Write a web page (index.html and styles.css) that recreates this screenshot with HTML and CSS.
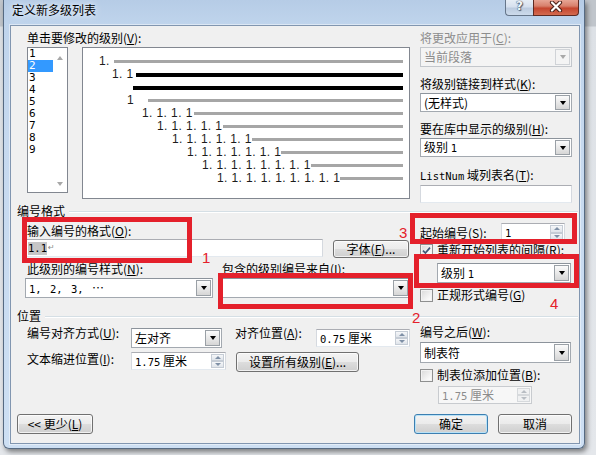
FILE: index.html
```html
<!DOCTYPE html>
<html lang="zh-CN">
<head>
<meta charset="utf-8">
<title>定义新多级列表</title>
<link rel="stylesheet" href="styles.css">
</head>
<body>
<div class="screen">
  <div class="window">
    <div class="titlebar">
      <div class="title">定义新多级列表</div>
      <div class="caps">
        <div class="cap help">?</div>
        <div class="cap close">
          <svg width="14" height="11" viewBox="0 0 14 11"><path d="M3 1.5 L11 9.5 M11 1.5 L3 9.5" stroke="#4a1f18" stroke-width="4.2" stroke-linecap="round"/><path d="M3 1.5 L11 9.5 M11 1.5 L3 9.5" stroke="#ffffff" stroke-width="2.2" stroke-linecap="round"/></svg>
        </div>
      </div>
    </div>
    <div class="client">
      <div class="top">
        <div class="top-left">
          <div class="lbl">单击要修改的级别(<u>V</u>):</div>
          <div class="level-row">
            <div class="listbox">
              <div class="items">
                <div class="item">1</div>
                <div class="item sel">2</div>
                <div class="item">3</div>
                <div class="item">4</div>
                <div class="item">5</div>
                <div class="item">6</div>
                <div class="item">7</div>
                <div class="item">8</div>
                <div class="item">9</div>
              </div>
              <div class="vscroll"><span class="sarrow up"></span><span class="sarrow down"></span></div>
            </div>
            <div class="preview">
              <div class="prow p1"><span class="num">1.</span><span class="ln g4"></span></div>
              <div class="prow p2"><span class="num">1. 1</span><span class="ln blk g2"></span></div>
              <div class="prow p3"><span class="ln blk"></span></div>
              <div class="prow p4"><span class="num">1</span><span class="ln g14"></span></div>
              <div class="prow p5"><span class="num">1. 1. 1. 1</span><span class="ln g1"></span></div>
              <div class="prow p6"><span class="num">1. 1. 1. 1. 1</span><span class="ln g1"></span></div>
              <div class="prow p7"><span class="num">1. 1. 1. 1. 1. 1</span><span class="ln"></span></div>
              <div class="prow p8"><span class="num">1. 1. 1. 1. 1. 1. 1</span><span class="ln"></span></div>
              <div class="prow p9"><span class="num">1. 1. 1. 1. 1. 1. 1. 1</span><span class="ln"></span></div>
              <div class="prow p10"><span class="num">1. 1. 1. 1. 1. 1. 1. 1. 1</span><span class="ln"></span></div>
            </div>
          </div>
        </div>
        <div class="top-right">
          <div class="lbl dis-txt">将更改应用于(<u>C</u>):</div>
          <div class="combo dis tr1"><span class="val"><span>当前段落</span></span><span class="dd"><i class="tri"></i></span></div>
          <div class="lbl tr-gap">将级别链接到样式(<u>K</u>):</div>
          <div class="combo tr2"><span class="val"><span>(无样式)</span></span><span class="dd"><i class="tri"></i></span></div>
          <div class="lbl tr-gap">要在库中显示的级别(<u>H</u>):</div>
          <div class="combo tr2"><span class="val"><span>级别&nbsp;<span class="m">1</span></span></span><span class="dd"><i class="tri"></i></span></div>
          <div class="lbl tr-gap4"><span class="m">ListNum</span> 域列表名(<u>T</u>):</div>
          <div class="tbox tr4"></div>
        </div>
      </div>

      <div class="ghead g-first"><span>编号格式</span><span class="gl"></span></div>

      <div class="mid">
        <div class="mid-left">
          <div class="lbl pl2 mt6">输入编号的格式(<u>O</u>):</div>
          <div class="fmt-row">
            <div class="tbox fmt"><span class="hl m">1.1</span><span class="ret">↵</span></div>
            <div class="btn font-btn">字体(<u>F</u>)...</div>
          </div>
          <div class="pair-row lbl-row">
            <div class="lbl pl2 w188">此级别的编号样式(<u>N</u>):</div>
            <div class="lbl w188">包含的级别编号来自(<u>I</u>):</div>
          </div>
          <div class="pair-row combo-row">
            <div class="combo w188 h20"><span class="val"><span><span class="m sp">1,&nbsp;2,&nbsp;3,&nbsp;</span>…</span></span><span class="dd"><i class="tri"></i></span></div>
            <div class="combo w188 h20"><span class="val"></span><span class="dd"><i class="tri"></i></span></div>
          </div>
        </div>
        <div class="mid-right">
          <div class="sn-row">
            <div class="lbl w81">起始编号(<u>S</u>):</div>
            <div class="spin sn"><span class="val"><span class="m">1</span></span><span class="arrows"><span class="arr up"><i></i></span><span class="arr down"><i></i></span></span></div>
          </div>
          <div class="cb-row mt1">
            <span class="cb checked"><svg width="9" height="9" viewBox="0 0 9 9"><path d="M1 4.6 L3.4 7 L8 1.6" fill="none" stroke="#3f5576" stroke-width="1.7"/></svg></span>
            <span class="lbl">重新开始列表的间隔(<u>R</u>):</span>
          </div>
          <div class="combo lvl h20"><span class="val"><span>级别&nbsp;<span class="m">1</span></span></span><span class="dd"><i class="tri"></i></span></div>
          <div class="cb-row mt5">
            <span class="cb"></span>
            <span class="lbl">正规形式编号(<u>G</u>)</span>
          </div>
        </div>
      </div>

      <div class="ghead g-second"><span>位置</span><span class="gl"></span></div>

      <div class="bot">
        <div class="bot-left">
          <div class="al-row">
            <div class="lbl w104 up2">编号对齐方式(<u>U</u>):</div>
            <div class="combo w91 h20"><span class="val"><span>左对齐</span></span><span class="dd"><i class="tri"></i></span></div>
            <div class="lbl w81 ml13 up2">对齐位置(<u>A</u>):</div>
            <div class="spin w94 mt1"><span class="val"><span><span class="m">0.75</span>&nbsp;厘米</span></span><span class="arrows"><span class="arr up"><i></i></span><span class="arr down"><i></i></span></span></div>
          </div>
          <div class="in-row">
            <div class="lbl w104">文本缩进位置(<u>I</u>):</div>
            <div class="spin w95"><span class="val"><span><span class="m">1.75</span>&nbsp;厘米</span></span><span class="arrows"><span class="arr up"><i></i></span><span class="arr down"><i></i></span></span></div>
            <div class="btn setall">设置所有级别(<u>E</u>)...</div>
          </div>
        </div>
        <div class="bot-right">
          <div class="lbl mt2">编号之后(<u>W</u>):</div>
          <div class="combo w151 h21 mt3"><span class="val"><span>制表符</span></span><span class="dd"><i class="tri"></i></span></div>
          <div class="cb-row mt5">
            <span class="cb"></span>
            <span class="lbl">制表位添加位置(<u>B</u>):</span>
          </div>
          <div class="spin dis w94 tabpos"><span class="val"><span><span class="m">1.75</span>&nbsp;厘米</span></span><span class="arrows"><span class="arr up"><i></i></span><span class="arr down"><i></i></span></span></div>
        </div>
      </div>

      <div class="btn-row">
        <div class="btn less">&lt;&lt; 更少(<u>L</u>)</div>
        <div class="btn def ok">确定</div>
        <div class="btn cancel">取消</div>
      </div>
    </div>
  </div>

  <div class="rb rb1"></div>
  <div class="rb rb2"></div>
  <div class="rb rb3"></div>
  <div class="rb rb4"></div>
  <div class="rn rn1">1</div>
  <div class="rn rn2">2</div>
  <div class="rn rn3">3</div>
  <div class="rn rn4">4</div>
</div>
</body>
</html>
```

FILE: styles.css
```css
* { box-sizing: border-box; margin: 0; padding: 0; }
html, body { width: 596px; height: 455px; overflow: hidden; }
body {
  background: #d3d8de;
  font-family: "Noto Sans CJK SC", "Liberation Sans", sans-serif;
  font-size: 12px;
  line-height: 14px;
  color: #000;
}
u { text-decoration: underline; text-underline-offset: 1px; text-decoration-thickness: 1px; }
.m { font-family: "DejaVu Sans Mono", monospace; font-size: 10.5px; }
.sp { word-spacing: 2px; }

.screen {
  position: relative;
  width: 596px;
  height: 455px;
  background: linear-gradient(180deg, #c0c5cb 0, #c0c5cb 26px, #dde1e6 27px, #e4e7eb 100%);
}

/* window frame */
.window {
  margin-left: 3px;
  width: 582px;
  height: 449px;
  display: flex;
  flex-direction: column;
  background: linear-gradient(180deg, #b6cce6 0, #bfd4ec 24px, #c6d9ef 140px, #cddff3 100%);
  border: 1px solid #566a82;
  border-top: none;
  border-radius: 0 0 6px 6px;
  box-shadow: 2px 3px 5px rgba(0, 0, 0, .45);
}
.titlebar { height: 25px; flex: none; display: flex; justify-content: space-between; align-items: flex-start; }
.title { padding: 3px 0 0 8px; text-shadow: 0 0 4px #eaf2fb, 0 0 8px #eaf2fb; }
.caps { display: flex; margin-right: 5px; }
.cap { height: 16px; display: flex; justify-content: center; }
.help {
  width: 28px;
  border: 1px solid #66768a;
  border-top: none;
  border-right: none;
  border-radius: 0 0 0 4px;
  background: linear-gradient(180deg, #e6edf5 0, #d6e0ee 45%, #bccbdf 55%, #cddbec 100%);
  color: #f4f7fb;
  font-family: "DejaVu Sans", sans-serif;
  font-weight: bold;
  font-size: 12px;
  line-height: 13px;
  text-shadow: 0 0 1px #3c4a5c, 0 0 1px #3c4a5c, 1px 1px 1px #55657a;
}
.close {
  width: 46px;
  border: 1px solid #5e2a22;
  border-top: none;
  border-radius: 0 0 4px 0;
  background: linear-gradient(180deg, #e7a595 0, #d8806c 40%, #c5462f 55%, #d36a4f 100%);
  align-items: flex-start;
  padding-top: 1px;
}

/* client area */
.client {
  flex: 1;
  margin: 0 4px 4px 6px;
  border: 1px solid #8196b0;
  background: #f0f0f0;
  padding: 5px 0 0 6px;
  display: flex;
  flex-direction: column;
  box-shadow: 0 0 0 1px rgba(255, 255, 255, .45);
}

.lbl { height: 14px; line-height: 14px; white-space: nowrap; }
.dis-txt { color: #8d8d8d; }
.pl2 { padding-left: 2px; }
.mt1 { margin-top: 1px; }
.mt2 { margin-top: 2px; }
.mt3 { margin-top: 3px; }
.mt5 { margin-top: 5px; }
.mt6 { margin-top: 6px; }
.mt7 { margin-top: 7px; }
.ml13 { margin-left: 13px; }
.up2 { margin-top: -2px; }
.w81 { width: 81px; }
.w91 { width: 91px; }
.w94 { width: 94px; }
.w95 { width: 95px; }
.w104 { width: 104px; }
.w151 { width: 151px; }
.w188 { width: 188px; }
.h20 { height: 20px; }
.h21 { height: 21px; }

/* top section */
.top { display: flex; height: 172px; flex: none; }
.top-left { width: 393px; padding-left: 10px; }
.top-right { width: 152px; margin-left: 10px; }
.level-row { display: flex; margin-top: 2px; align-items: flex-start; }

.listbox { width: 41px; height: 146px; border: 1px solid #828790; background: #fff; display: flex; }
.items { width: 25px; }
.item { height: 12px; line-height: 12px; padding-left: 1px; font-family: "DejaVu Sans Mono", monospace; font-size: 11px; }
.item.sel { background: #3399ff; color: #fff; }
.vscroll { width: 14px; display: flex; flex-direction: column; justify-content: space-between; align-items: center; padding: 8px 0 6px; }
.sarrow { width: 0; height: 0; border-left: 3.5px solid transparent; border-right: 3.5px solid transparent; }
.sarrow.up { border-bottom: 4px solid #a8a8a8; }
.sarrow.down { border-top: 4px solid #a8a8a8; }

.preview { width: 328px; height: 152px; margin-left: 14px; border: 1px solid #828790; background: #fff; padding: 7px 6px 0 0; }
.prow { height: 13px; display: flex; align-items: center; }
.num { font-family: "Liberation Sans", sans-serif; font-size: 12px; letter-spacing: .4px; line-height: 13px; white-space: pre; color: #1c1c1c; }
.ln { flex: 1; height: 3px; background: #a6a6a6; }
.ln.blk { height: 4px; background: #000; }
.g1 { margin-left: 1px; }
.g2 { margin-left: 2px; }
.g4 { margin-left: 4px; }
.g14 { margin-left: 14px; }
.p1 { padding-left: 16px; }
.p2 { padding-left: 29px; }
.p3 { padding-left: 50px; }
.p4 { padding-left: 44px; }
.p5 { padding-left: 59px; }
.p6 { padding-left: 74px; }
.p7 { padding-left: 89px; }
.p8 { padding-left: 104px; }
.p9 { padding-left: 119px; }
.p10 { padding-left: 134px; }

.tr1 { margin-top: 2px; height: 20px; }
.tr2 { margin-top: 2px; height: 19px; }
.tr-gap { margin-top: 10px; }
.tr-gap4 { margin-top: 11px; }
.tr4 { margin-top: 3px; height: 18px; }

/* controls */
.combo {
  display: flex;
  background: #fff;
  border: 1px solid #a3a9b0;
  border-top-color: #8c939b;
}
.combo .val { flex: 1; padding-left: 3px; display: flex; align-items: center; white-space: nowrap; }
.dd {
  width: 15px;
  margin: 1px;
  border: 1px solid #9aa0a6;
  background: linear-gradient(180deg, #fbfbfb 0, #e9e9e9 50%, #d6d6d6 100%);
  display: flex;
  align-items: center;
  justify-content: center;
}
.tri { width: 0; height: 0; border-left: 3.5px solid transparent; border-right: 3.5px solid transparent; border-top: 4px solid #000; }
.combo.dis { background: #f4f4f4; border-color: #c3c7cc; color: #8c8c8c; }
.combo.dis .dd { border-color: #d0d3d7; background: #f4f4f4; }
.combo.dis .tri { border-top-color: #a8a8a8; }

.tbox { background: #fff; border: 1px solid #abadb3; border-color: #abadb3 #d5d9df #e3e9ef #d5d9df; }

.spin { display: flex; height: 18px; background: #fff; border: 1px solid #abadb3; border-color: #abadb3 #d5d9df #e3e9ef #d5d9df; }
.spin .val { flex: 1; padding-left: 3px; display: flex; align-items: center; white-space: nowrap; }
.arrows { width: 14px; display: flex; flex-direction: column; padding: 1px 1px 1px 0; }
.arr { flex: 1; display: flex; align-items: center; justify-content: center; background: linear-gradient(180deg, #f6f7f9, #dfe4ea); border: 1px solid #c5ccd5; }
.arr i { width: 0; height: 0; border-left: 3px solid transparent; border-right: 3px solid transparent; }
.arr.up i { border-bottom: 3px solid #7f90a6; }
.arr.down i { border-top: 3px solid #7f90a6; }
.spin.dis { background: #f7f7f7; border-color: #c8cbcf; color: #8c8c8c; }
.spin.dis .arr { background: #f0f1f2; border-color: #d6d9dc; }
.spin.dis .arr i { border-bottom-color: #b8bdc3; border-top-color: #b8bdc3; }

.btn {
  height: 20px;
  border: 1px solid #707070;
  border-radius: 3px;
  background: linear-gradient(180deg, #f3f3f3 0, #ebebeb 50%, #dddddd 50%, #cfcfcf 100%);
  box-shadow: inset 0 0 0 1px rgba(255, 255, 255, .7);
  display: flex;
  align-items: center;
  justify-content: center;
  white-space: nowrap;
  flex: none;
}
.btn.def { border-color: #3c7fb1; box-shadow: inset 0 0 0 1px #b9e2f7; }

.cb {
  width: 13px;
  height: 13px;
  border: 1px solid #8e8f8f;
  background: linear-gradient(135deg, #d9d9d9 0, #f6f6f6 70%, #ffffff 100%);
  box-shadow: inset 0 0 0 1px #f2f2f2;
  flex: none;
  display: flex;
  align-items: center;
  justify-content: center;
}
.cb-row { display: flex; align-items: center; height: 14px; gap: 4px; }

/* group headings */
.ghead { display: flex; align-items: center; height: 14px; flex: none; }
.g-first { margin-top: 1px; }
.g-second { margin-top: 5px; }
.ghead .gl { flex: 1; height: 2px; border-top: 1px solid #d5dfe5; border-bottom: 1px solid #ffffff; margin: 2px 1px 0 4px; }

/* middle */
.mid { display: flex; height: 86px; flex: none; }
.mid-left { width: 393px; padding-left: 8px; }
.mid-right { width: 152px; margin-left: 10px; }
.fmt-row { display: flex; margin-top: 1px; align-items: flex-start; }
.fmt { width: 298px; height: 18px; display: flex; align-items: center; padding-left: 2px; }
.hl { background: #c6c6c6; line-height: 13px; display: inline-block; }
.ret { font-family: "DejaVu Sans", sans-serif; font-size: 8px; color: #8a8a8a; margin-left: 1px; }
.font-btn { width: 76px; height: 18px; margin: 1px 0 0 10px; }
.pair-row { display: flex; gap: 9px; }
.lbl-row { margin-top: 4px; }
.combo-row { margin-top: 2px; }

.sn-row { display: flex; align-items: center; height: 19px; margin-top: 5px; }
.sn { width: 64px; height: 19px; }
.lvl { width: 134px; margin: 6px 0 0 17px; }

/* bottom */
.bot { display: flex; height: 81px; flex: none; }
.bot-left { width: 393px; padding-left: 10px; }
.bot-right { width: 152px; margin-left: 10px; }
.al-row { display: flex; align-items: flex-start; height: 20px; margin-top: 5px; }
.in-row { display: flex; align-items: flex-start; height: 20px; margin-top: 4px; }
.setall { width: 123px; margin-left: 10px; }
.tabpos { margin: 4px 0 0 18px; }

.btn-row { display: flex; height: 20px; margin-top: 10px; padding-right: 7px; flex: none; }
.less { width: 76px; }
.ok { width: 74px; margin-left: auto; }
.cancel { width: 74px; margin-left: 10px; }

/* red annotations drawn over the screenshot */
.rb { position: absolute; border: 5px solid #e4202b; }
.rb1 { left: 22px; top: 217px; width: 170px; height: 46px; }
.rb2 { left: 218px; top: 273px; width: 195px; height: 36px; }
.rb3 { left: 410px; top: 213px; width: 167px; height: 31px; }
.rb4 { left: 414px; top: 254px; width: 165px; height: 34px; }
.rn { position: absolute; color: #e4202b; font-family: "Liberation Sans", sans-serif; font-size: 15px; line-height: 16px; }
.rn1 { left: 202px; top: 250px; }
.rn2 { left: 412px; top: 310px; }
.rn3 { left: 399px; top: 225px; }
.rn4 { left: 550px; top: 296px; }
```
